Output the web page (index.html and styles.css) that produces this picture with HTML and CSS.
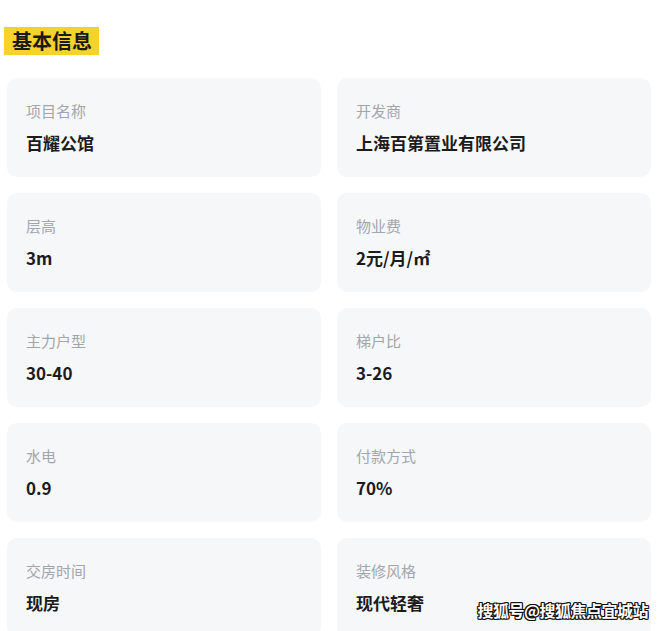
FILE: index.html
```html
<!DOCTYPE html>
<html lang="zh">
<head>
<meta charset="utf-8">
<link rel="stylesheet" href="styles.css">
</head>
<body>
<div class="page">
  <div class="title-wrap"><span class="title">基本信息</span></div>
  <div class="grid">
    <div class="card"><div class="label">项目名称</div><div class="value">百耀公馆</div></div>
    <div class="card"><div class="label">开发商</div><div class="value">上海百第置业有限公司</div></div>
    <div class="card"><div class="label">层高</div><div class="value">3m</div></div>
    <div class="card"><div class="label">物业费</div><div class="value">2元/月/㎡</div></div>
    <div class="card"><div class="label">主力户型</div><div class="value">30-40</div></div>
    <div class="card"><div class="label">梯户比</div><div class="value">3-26</div></div>
    <div class="card"><div class="label">水电</div><div class="value">0.9</div></div>
    <div class="card"><div class="label">付款方式</div><div class="value">70%</div></div>
    <div class="card"><div class="label">交房时间</div><div class="value">现房</div></div>
    <div class="card"><div class="label">装修风格</div><div class="value">现代轻奢</div></div>
  </div>
  <div class="watermark">搜狐号@搜狐焦点宜城站</div>
</div>
</body>
</html>
```
FILE: styles.css
```css
html, body {
  margin: 0;
  padding: 0;
  background: #ffffff;
}
body {
  font-family: "Noto Sans CJK SC", "Noto Sans", sans-serif;
  width: 660px;
  height: 631px;
  overflow: hidden;
}
.page {
  position: relative;
  height: 631px;
  overflow: hidden;
}
.title-wrap {
  padding: 27px 0 0 4px;
  height: 28px;
}
.title {
  display: inline-block;
  background: #f6d22c;
  color: #1a1a1a;
  font-size: 20px;
  font-weight: 700;
  line-height: 28px;
  height: 28px;
  padding: 0 7px 0 8px;
}
.grid {
  display: grid;
  grid-template-columns: 314px 314px;
  column-gap: 16px;
  row-gap: 16px;
  padding: 23px 0 0 7px;
}
.card {
  background: #f6f7f9;
  border-radius: 10px;
  height: 99px;
  box-sizing: border-box;
  padding: 24px 0 0 19px;
}
.label {
  font-size: 15px;
  line-height: 18px;
  color: #a2a6ac;
}
.value {
  margin-top: 11px;
  font-size: 17px;
  line-height: 24px;
  font-weight: 700;
  color: #1c1c1c;
}
.watermark {
  position: absolute;
  right: 12px;
  bottom: 9px;
  font-size: 16px;
  font-weight: 700;
  color: #ffffff;
  letter-spacing: -0.5px;
  text-shadow: -1px -1px 0 #111, 1px -1px 0 #111, -1px 1px 0 #111, 1px 1px 0 #111, 0 1px 0 #111, 0 -1px 0 #111, 1px 0 0 #111, -1px 0 0 #111;
}
```
